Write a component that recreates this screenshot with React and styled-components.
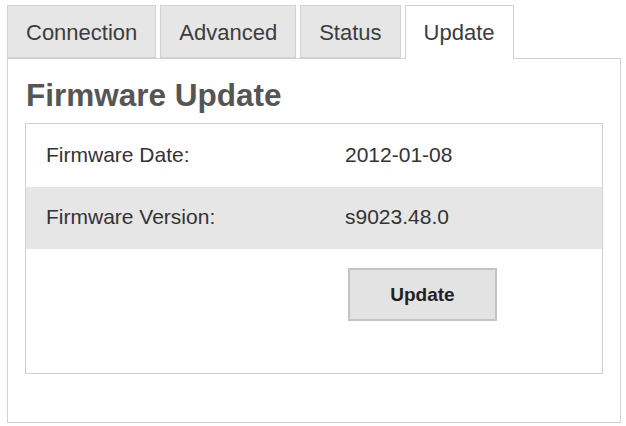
import React from "react";
import styled, { createGlobalStyle } from "styled-components";

const Global = createGlobalStyle`
  html, body { margin: 0; padding: 0; background: #fff; }
  body { font-family: "Liberation Sans", Arial, sans-serif; color: #333; }
`;

const Page = styled.div`
  padding: 5px 5px 3px 7px;
  width: 614px;
`;

const TabBar = styled.div`
  display: flex;
  gap: 4px;
  align-items: flex-end;
  height: 53px;
  position: relative;
  z-index: 1;
`;

const Tab = styled.div`
  box-sizing: border-box;
  display: flex;
  align-items: center;
  height: ${(p) => (p.$active ? "54px" : "53px")};
  margin-bottom: ${(p) => (p.$active ? "-1px" : "0")};
  padding: ${(p) => (p.$active ? "1px 18px 1px" : "2px 18px 0")};
  border: 1px solid #d2d2d2;
  border-bottom: ${(p) => (p.$active ? "none" : "1px solid #d2d2d2")};
  background: ${(p) => (p.$active ? "#fff" : "#e6e6e6")};
  font-size: 22px;
  color: #3c3c3c;
  line-height: 26px;
`;

const Panel = styled.div`
  box-sizing: border-box;
  height: 365px;
  border: 1px solid #d2d2d2;
  padding: 18px 17px 0 17px;
`;

const Title = styled.h1`
  margin: 0 0 0 1px;
  font-size: 31.5px;
  font-weight: bold;
  color: #555;
  line-height: 36px;
  height: 46px;
`;

const Box = styled.div`
  box-sizing: border-box;
  height: 251px;
  border: 1px solid #d0d0d0;
`;

const Row = styled.div`
  display: grid;
  grid-template-columns: 319px 1fr;
  align-items: center;
  height: ${(p) => p.$h || "63px"};
  background: ${(p) => (p.$shade ? "#e6e6e6" : "#fff")};
  font-size: 21px;
  line-height: 24px;
  color: #333;
`;

const Label = styled.div`
  padding: 0 0 2px 20px;
`;

const Value = styled.div`
  padding-bottom: 2px;
`;

const ButtonCell = styled.div`
  padding: 19px 0 0 3px;
  align-self: start;
`;

const Button = styled.button`
  box-sizing: border-box;
  width: 149px;
  height: 53px;
  background: #e3e3e3;
  border: 2px solid #c4c4c4;
  font-family: "Liberation Sans", Arial, sans-serif;
  font-weight: bold;
  font-size: 19px;
  color: #222;
  padding: 0;
`;

export default function App() {
  return (
    <>
      <Global />
      <Page>
        <TabBar>
          <Tab>Connection</Tab>
          <Tab>Advanced</Tab>
          <Tab>Status</Tab>
          <Tab $active>Update</Tab>
        </TabBar>
        <Panel>
          <Title>Firmware Update</Title>
          <Box>
            <Row>
              <Label>Firmware Date:</Label>
              <Value>2012-01-08</Value>
            </Row>
            <Row $shade $h="62px">
              <Label>Firmware Version:</Label>
              <Value>s9023.48.0</Value>
            </Row>
            <Row $h="124px">
              <div />
              <ButtonCell>
                <Button>Update</Button>
              </ButtonCell>
            </Row>
          </Box>
        </Panel>
      </Page>
    </>
  );
}
